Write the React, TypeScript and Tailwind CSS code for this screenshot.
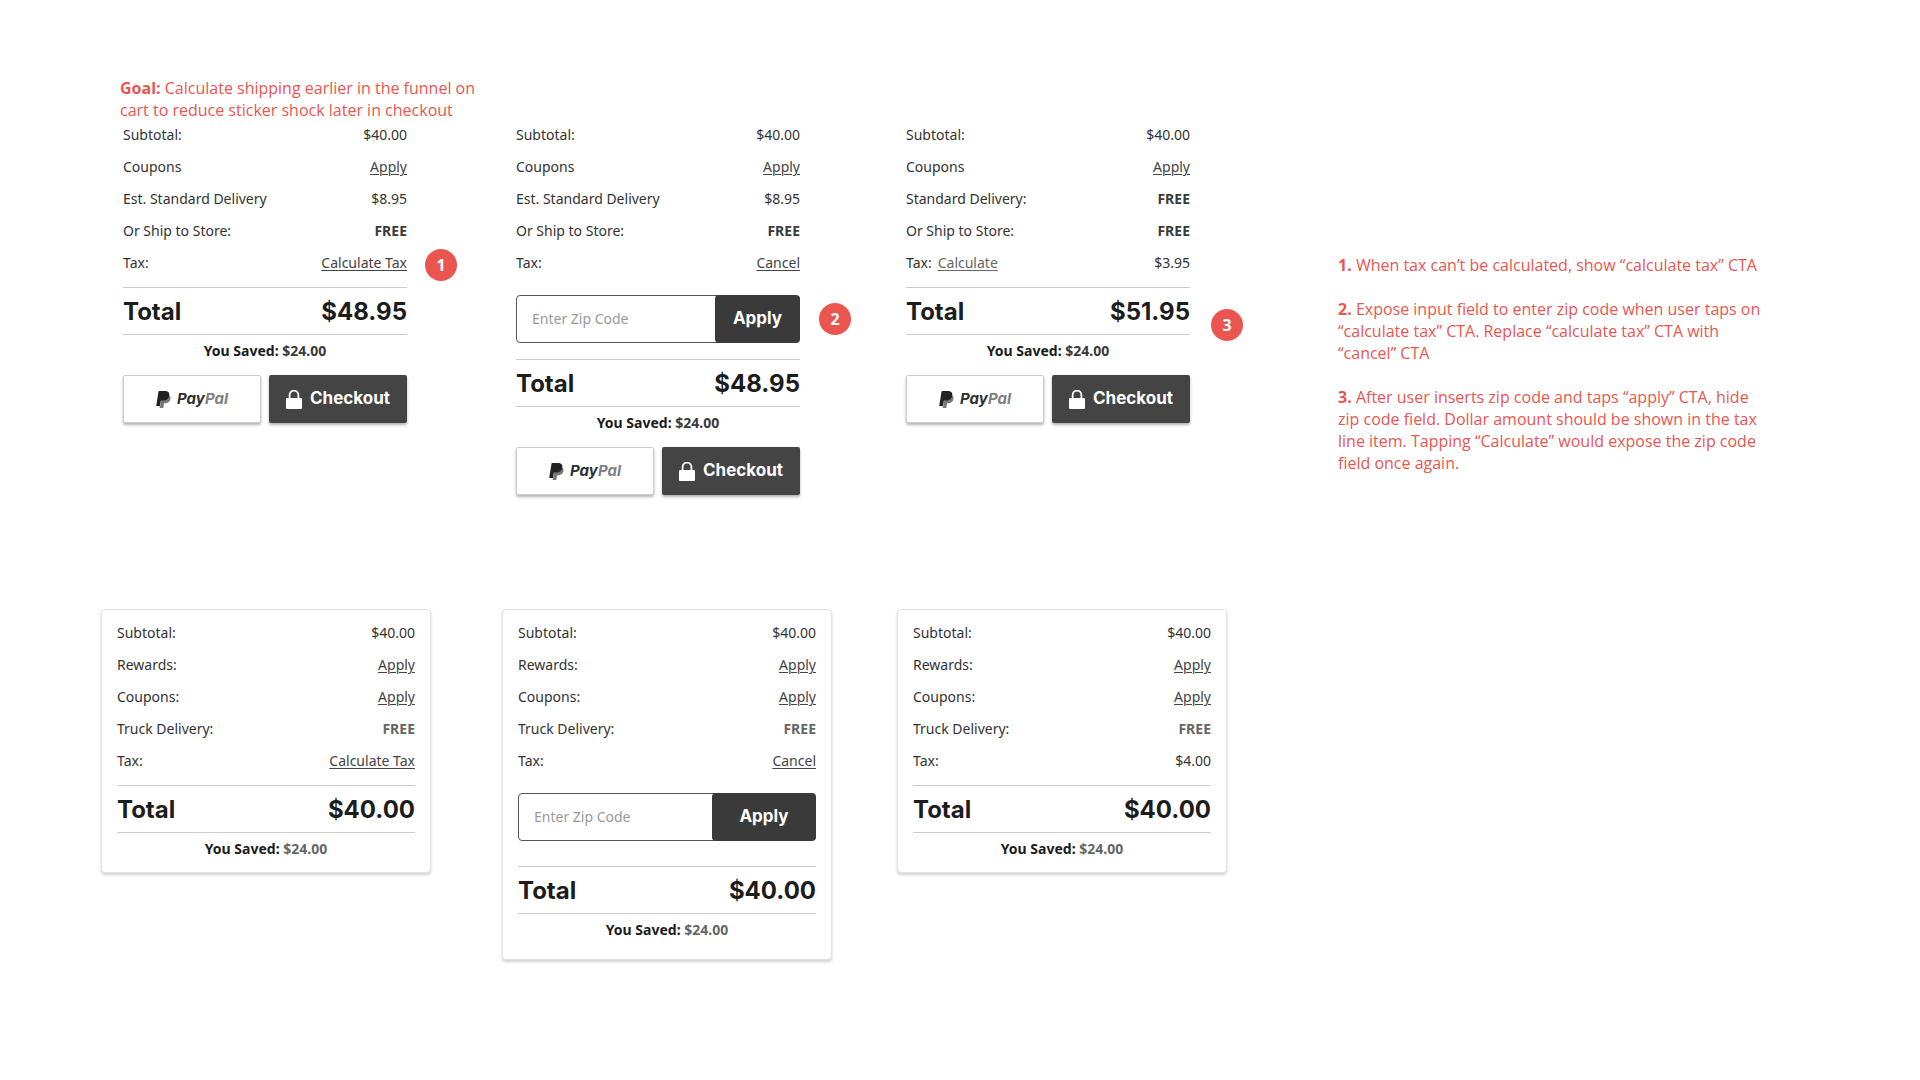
import { useState } from "react";
import type { ReactNode } from "react";

type Row = { label: string; action?: string; value: ReactNode };

function TextLink({ children, tone = "text-[#444444]" }: { children: ReactNode; tone?: string }) {
  return (
    <a href="#" className={`${tone} underline decoration-1 underline-offset-2`}>
      {children}
    </a>
  );
}

function Free({ tone = "text-[#3a3a3a]" }: { tone?: string }) {
  return <span className={`font-bold ${tone}`}>FREE</span>;
}

function Rows({ rows }: { rows: Row[] }) {
  return (
    <dl className="flex flex-col gap-3 text-sm text-[#333333]">
      {rows.map((row) => (
        <div key={row.label} className="flex justify-between">
          <dt className="flex gap-1.5">
            {row.label}
            {row.action && <TextLink tone="text-[#666666]">{row.action}</TextLink>}
          </dt>
          <dd>{row.value}</dd>
        </div>
      ))}
    </dl>
  );
}

function ZipForm({ wide = false }: { wide?: boolean }) {
  const [zip, setZip] = useState("");
  return (
    <form className="mt-[22px] flex h-12" onSubmit={(e) => e.preventDefault()}>
      <input
        aria-label="Zip code"
        placeholder="Enter Zip Code"
        value={zip}
        onChange={(e) => setZip(e.target.value)}
        className="-mr-1 w-0 min-w-0 flex-1 rounded-l border border-[#555555] bg-white px-[15px] text-sm text-[#333333] outline-none placeholder:text-[#9a9a9a]"
      />
      <button
        type="submit"
        className={`${wide ? "w-[104px]" : "w-[85px]"} rounded bg-[#3a3a3a] font-[Inter] text-[17px] font-bold text-white`}
      >
        Apply
      </button>
    </form>
  );
}

function Total({ amount, spacing = "mt-3.5" }: { amount: string; spacing?: string }) {
  return (
    <div
      className={`${spacing} flex h-12 items-center justify-between border-y border-[#cccccc] pt-0.5 font-[Inter] text-2xl font-bold text-[#1c1c1c]`}
    >
      <span>Total</span>
      <span>{amount}</span>
    </div>
  );
}

function Saved({ tone = "text-[#3a3a3a]" }: { tone?: string }) {
  return (
    <p className="mt-1.5 text-center text-sm font-bold text-[#1c1c1c]">
      You Saved: <span className={tone}>$24.00</span>
    </p>
  );
}

function PayPalMark() {
  return (
    <svg viewBox="1.8 0 20.5 24" className="h-[17px] w-[15px]" aria-hidden="true">
      <path
        fill="#777777"
        d="M21.222 6.917a3.35 3.35 0 0 0-.607-.541L12 8 8.5 14.31l-1.187 7.527h-.506l-.24 1.516a.56.56 0 0 0 .554.647h3.882c.46 0 .85-.334.922-.788.06-.26.76-4.852.816-5.09a.932.932 0 0 1 .923-.788h.58c3.76 0 6.705-1.528 7.565-5.946.36-1.847.174-3.388-.777-4.471z"
      />
      <path
        fill="#222222"
        d="M7.076 21.337H2.47a.641.641 0 0 1-.633-.74L4.944.901C5.026.382 5.474 0 5.998 0h7.46c2.57 0 4.578.543 5.69 1.81 1.01 1.15 1.304 2.42 1.012 4.287-.023.143-.047.288-.077.437-.983 5.05-4.349 6.797-8.647 6.797h-2.19c-.524 0-.968.382-1.05.9l-1.12 7.106z"
      />
    </svg>
  );
}

function LockIcon() {
  return (
    <svg viewBox="0 0 16 19" className="h-[19px] w-4" aria-hidden="true">
      <path d="M3.6 9V5a4.4 4.4 0 0 1 8.8 0v4" fill="none" stroke="white" strokeWidth="1.8" />
      <rect y="8" width="16" height="11" rx="1" fill="white" />
    </svg>
  );
}

function PayButtons() {
  return (
    <div className="mt-3.5 grid h-12 grid-cols-2 gap-2">
      <button
        type="button"
        className="flex items-center justify-center gap-1.5 rounded-xs border border-[#cccccc] bg-white shadow-[0_2px_3px_rgba(0,0,0,0.3)]"
      >
        <PayPalMark />
        <span className="font-[Inter] text-[15px] leading-5 font-bold text-[#2f2f2f] italic">
          Pay<span className="text-[#808080]">Pal</span>
        </span>
      </button>
      <button
        type="button"
        className="flex items-center justify-center gap-2 rounded-xs bg-[#444444] font-[Inter] text-[17px] font-bold text-white shadow-[0_2px_3px_rgba(0,0,0,0.3)]"
      >
        <LockIcon />
        Checkout
      </button>
    </div>
  );
}

function Badge({ n, spacing }: { n: number; spacing: string }) {
  return (
    <span
      className={`${spacing} flex size-8 shrink-0 items-center justify-center rounded-full bg-[#eb5550] text-base font-bold text-white`}
    >
      {n}
    </span>
  );
}

function Card({ children, bottom = "pb-[13px]" }: { children: ReactNode; bottom?: string }) {
  return (
    <article
      className={`${bottom} rounded border border-[#e2e2e2] bg-white px-[15px] pt-[13px] shadow-[0_2px_3px_rgba(0,0,0,0.18)]`}
    >
      {children}
    </article>
  );
}

const storeRows = (tax: ReactNode): Row[] => [
  { label: "Subtotal:", value: "$40.00" },
  { label: "Coupons", value: <TextLink>Apply</TextLink> },
  { label: "Est. Standard Delivery", value: "$8.95" },
  { label: "Or Ship to Store:", value: <Free /> },
  { label: "Tax:", value: tax },
];

const freeRows: Row[] = [
  { label: "Subtotal:", value: "$40.00" },
  { label: "Coupons", value: <TextLink>Apply</TextLink> },
  { label: "Standard Delivery:", value: <Free /> },
  { label: "Or Ship to Store:", value: <Free /> },
  { label: "Tax:", action: "Calculate", value: "$3.95" },
];

const truckRows = (tax: ReactNode): Row[] => [
  { label: "Subtotal:", value: "$40.00" },
  { label: "Rewards:", value: <TextLink>Apply</TextLink> },
  { label: "Coupons:", value: <TextLink>Apply</TextLink> },
  { label: "Truck Delivery:", value: <Free tone="text-[#666666]" /> },
  { label: "Tax:", value: tax },
];

export default function App() {
  return (
    <main className="min-h-screen bg-white pt-[77px] pb-16 pl-[101px] font-['Noto_Sans',sans-serif]">
      <p className="ml-[19px] max-w-[370px] font-['Open_Sans',sans-serif] text-base leading-[22px] text-[#eb5550]">
        <strong>Goal:</strong> Calculate shipping earlier in the funnel on cart to reduce sticker shock later in
        checkout
      </p>

      <section className="mt-1 grid grid-cols-[401fr_395fr_441fr_582fr]">
        <div className="flex min-w-0 items-start gap-[18px] pr-[45px] pl-[22px]">
          <div className="flex-1">
            <Rows rows={storeRows(<TextLink>Calculate Tax</TextLink>)} />
            <Total amount="$48.95" />
            <Saved />
            <PayButtons />
          </div>
          <Badge n={1} spacing="mt-[124px]" />
        </div>

        <div className="flex min-w-0 items-start gap-[19px] pr-[46px] pl-[14px]">
          <div className="flex-1">
            <Rows rows={storeRows(<TextLink>Cancel</TextLink>)} />
            <ZipForm />
            <Total amount="$48.95" spacing="mt-4" />
            <Saved />
            <PayButtons />
          </div>
          <Badge n={2} spacing="mt-[178px]" />
        </div>

        <div className="flex min-w-0 items-start gap-[21px] pr-[95px] pl-[9px]">
          <div className="flex-1">
            <Rows rows={freeRows} />
            <Total amount="$51.95" />
            <Saved />
            <PayButtons />
          </div>
          <Badge n={3} spacing="mt-[184px]" />
        </div>

        <div className="mt-[129px] flex max-w-[430px] min-w-0 flex-col gap-[22px] font-['Open_Sans',sans-serif] text-base leading-[22px] text-[#eb5550]">
          <p>
            <strong>1.</strong> When tax can’t be calculated, show “calculate tax” CTA
          </p>
          <p>
            <strong>2.</strong> Expose input field to enter zip code when user taps on “calculate tax” CTA. Replace
            “calculate tax” CTA with “cancel” CTA
          </p>
          <p>
            <strong>3.</strong> After user inserts zip code and taps “apply” CTA, hide zip code field. Dollar amount
            should be shown in the tax line item. Tapping “Calculate” would expose the zip code field once again.
          </p>
        </div>
      </section>

      <section className="mt-[114px] grid grid-cols-[401fr_395fr_441fr_582fr] items-start">
        <div className="min-w-0 pr-[71px]">
          <Card>
            <Rows rows={truckRows(<TextLink>Calculate Tax</TextLink>)} />
            <Total amount="$40.00" />
            <Saved tone="text-[#666666]" />
          </Card>
        </div>
        <div className="min-w-0 pr-[65px]">
          <Card bottom="pb-[19px]">
            <Rows rows={truckRows(<TextLink>Cancel</TextLink>)} />
            <ZipForm wide />
            <Total amount="$40.00" spacing="mt-[25px]" />
            <Saved tone="text-[#666666]" />
          </Card>
        </div>
        <div className="min-w-0 pr-[111px]">
          <Card>
            <Rows rows={truckRows("$4.00")} />
            <Total amount="$40.00" />
            <Saved tone="text-[#666666]" />
          </Card>
        </div>
      </section>
    </main>
  );
}
